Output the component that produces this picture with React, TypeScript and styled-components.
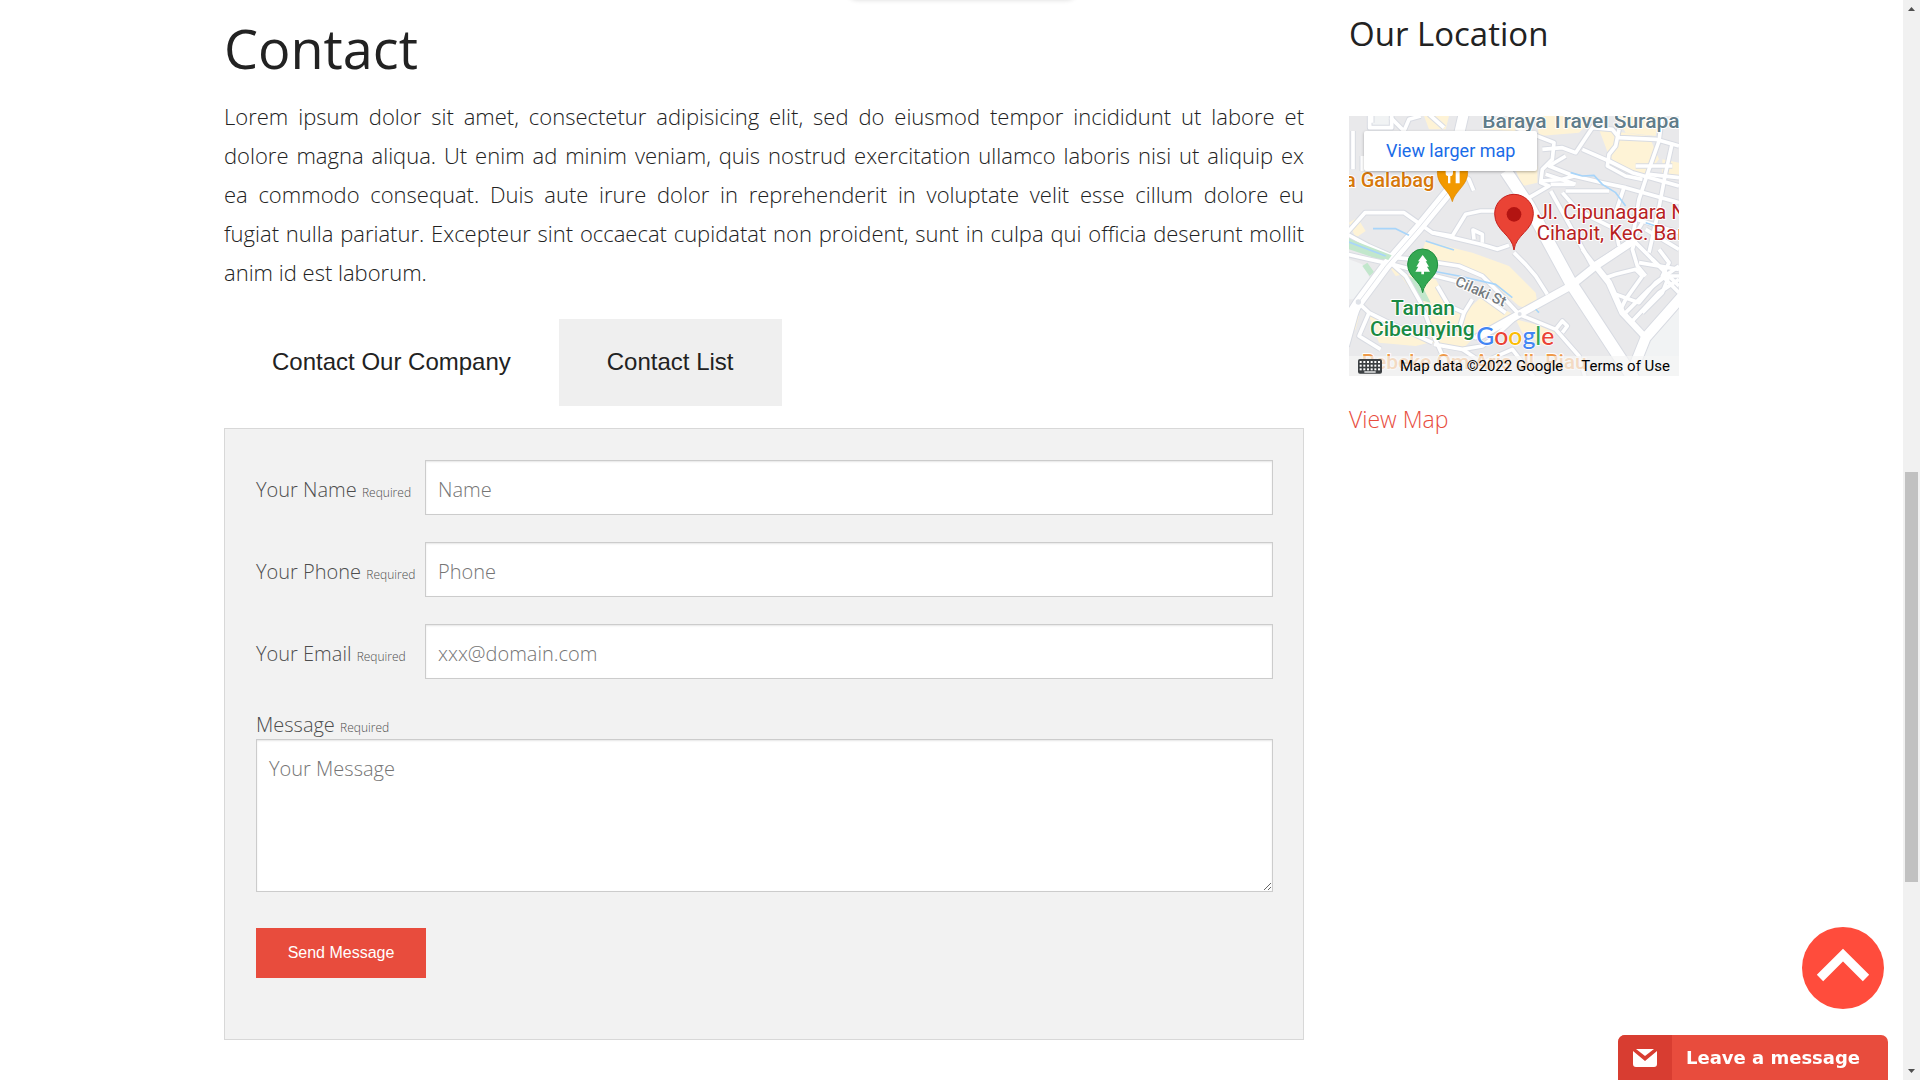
import React from "react";
import styled, { createGlobalStyle } from "styled-components";

const sans = '"Open Sans", "Noto Sans", sans-serif';
const arial = '"Liberation Sans", Arial, sans-serif';
const roboto = 'Roboto, "Liberation Sans", sans-serif';
const red = "#e84c3d";

const GlobalStyle = createGlobalStyle`
  *, *::before, *::after { box-sizing: border-box; }
  body {
    margin: 0;
    background: #fff;
    color: #222;
    font-family: ${sans};
    font-weight: 300;
  }
`;

const Viewport = styled.div`
  display: grid;
  grid-template-columns: minmax(0, 1fr) 17px;
  height: 100vh;
  overflow: hidden;
`;

const Page = styled.div`
  overflow: hidden;
`;

const Row = styled.main`
  display: grid;
  grid-template-columns: minmax(0, 36fr) minmax(0, 11fr);
  column-gap: 45px;
  align-items: start;
  max-width: 1455px;
  margin: 0 auto;
`;

const Content = styled.section`
  padding-top: 9px;
`;

const Title = styled.h1`
  margin: 0 0 10px;
  font-size: 54px;
  line-height: 78px;
  font-weight: 400;
`;

const Intro = styled.p`
  margin: 0 0 27px;
  font-size: 22px;
  line-height: 39px;
  text-align: justify;
`;

const Tabs = styled.div`
  display: flex;
  margin-bottom: 22px;
`;

const Tab = styled.button<{ $active?: boolean }>`
  height: 87px;
  padding: 0 48px 2px;
  border: 0;
  background: ${(p) => (p.$active ? "#fff" : "#efefef")};
  color: #222;
  font: 400 24px ${arial};
  cursor: pointer;
`;

const Form = styled.form`
  padding: 31px 30px 61px 31px;
  border: 1px solid #d8d8d8;
  background: #f2f2f2;
`;

const Field = styled.div`
  display: grid;
  grid-template-columns: 169px minmax(0, 1fr);
  align-items: center;
  margin-bottom: 27px;
`;

const Label = styled.label`
  display: block;
  padding-top: 4px;
  color: #4d4d4d;
  font-size: 20px;
  line-height: 29px;
  white-space: nowrap;
`;

const Required = styled.small`
  font-size: 12px;
  line-height: 1;
`;

const controlStyle = `
  display: block;
  width: 100%;
  margin: 0;
  border: 1px solid #ccc;
  border-radius: 0;
  background: #fff;
  box-shadow: inset 0 1px 2px rgba(0, 0, 0, 0.1);
  color: #4d4d4d;
  font: 300 20px ${sans};
  outline: none;
  &::placeholder { color: #757575; opacity: 1; }
`;

const Input = styled.input`
  ${controlStyle}
  height: 55px;
  padding: 3px 12px 0;
`;

const Textarea = styled.textarea`
  ${controlStyle}
  height: 153px;
  padding: 15px 12px;
  resize: both;
`;

const Submit = styled.button`
  display: block;
  min-width: 170px;
  height: 50px;
  margin-top: 36px;
  padding: 0 30px;
  border: 0;
  background: ${red};
  color: #fff;
  font: 400 16px ${arial};
  cursor: pointer;
`;

const Sidebar = styled.aside`
  padding-top: 11px;
`;

const SideTitle = styled.h2`
  margin: 0 0 59px;
  font-size: 33px;
  line-height: 46px;
  font-weight: 400;
`;

const MapFrame = styled.div`
  position: relative;
  height: 260px;
  margin-bottom: 24px;
  overflow: hidden;
  background: #e9e9eb;
  font-family: ${roboto};
  font-weight: 400;
`;

const MapDrawing = styled.svg`
  display: block;
  width: 100%;
  height: 100%;
`;

const LargerMap = styled.a`
  position: absolute;
  top: 15px;
  left: 15px;
  padding: 0 22px;
  border-radius: 2px;
  background: #fff;
  box-shadow: 0 1px 3px rgba(0, 0, 0, 0.3);
  color: #1a6be8;
  font-size: 18px;
  line-height: 40px;
  text-decoration: none;
`;

const MapFooter = styled.div`
  position: absolute;
  right: 0;
  bottom: 0;
  left: 0;
  display: flex;
  justify-content: space-between;
  align-items: center;
  height: 20px;
  padding: 0 9px;
  background: rgba(245, 245, 245, 0.7);
  color: #000;
  font-size: 15px;
  a { color: inherit; text-decoration: none; }
`;

const ViewMap = styled.a`
  color: ${red};
  font-size: 23px;
  line-height: 38px;
  text-decoration: none;
`;

const TopHint = styled.div`
  position: fixed;
  top: -20px;
  left: 847px;
  width: 230px;
  height: 20px;
  border-radius: 12px;
  box-shadow: 0 0 5px rgba(0, 0, 0, 0.15);
`;

const ToTop = styled.button`
  position: fixed;
  right: 36px;
  bottom: 71px;
  width: 82px;
  height: 82px;
  padding: 0;
  border: 0;
  border-radius: 50%;
  background: #ff4c3c;
  cursor: pointer;
  svg { display: block; }
`;

const Chat = styled.button`
  position: fixed;
  right: 32px;
  bottom: 0;
  display: flex;
  width: 270px;
  height: 45px;
  padding: 0;
  border: 0;
  border-radius: 7px 7px 0 0;
  overflow: hidden;
  background: ${red};
  color: #fff;
  font: 700 18px "DejaVu Sans", Verdana, sans-serif;
  cursor: pointer;
`;

const ChatIcon = styled.span`
  display: grid;
  place-items: center;
  width: 54px;
  height: 100%;
  background: #d83d31;
`;

const ChatText = styled.span`
  padding-left: 14px;
  line-height: 45px;
`;

const Scrollbar = styled.div`
  display: flex;
  flex-direction: column;
  background: #f1f1f1;
`;

const Arrow = styled.svg`
  display: block;
  width: 17px;
  height: 17px;
`;

const Gap = styled.div<{ $grow: number }>`
  flex: ${(p) => p.$grow} 1 0;
`;

const Thumb = styled.div`
  flex: 410 1 0;
  margin: 0 2px;
  background: #c1c1c1;
`;

const minorRoads = [
  "M-5 350L48 290H165L250 350L310 360L350 295L395 285H440",
  "M250 350L395 385L445 400L480 388",
  "M375 370L372 342L400 355L400 380",
  "M330 170L360 190L374 224",
  "M62 -5V35H128V-5M68 -5V20",
  "M125 5L165 45L180 10L215 0",
  "M12 45V160M40 165V120",
  "M240 -5L285 35",
  "M-5 355L60 390L140 425L200 430L330 450L400 480L450 530L510 595",
  "M-5 415L60 430L130 445L260 480L340 500L400 540L470 590",
  "M130 445L170 480L215 560L250 650L290 740",
  "M28 560L60 590L110 615L250 680",
  "M60 590L30 660L95 700",
  "M265 510L300 570L345 590L370 550",
  "M345 590L330 640L380 665L510 595",
  "M255 685L340 700L400 690L440 660L510 595",
  "M340 700L400 740L490 700L560 790",
  "M510 595L620 640L690 720L710 790",
  "M620 640L640 615L655 630L640 650",
  "M495 410L530 445L560 480L595 535",
  "M540 245L600 210L575 200L580 160L610 130L615 80L500 35",
  "M580 100L640 95L680 110L730 35L760 -5",
  "M575 195L640 190L675 180L600 150L650 120",
  "M650 225H780M605 205H675M590 175L680 205",
  "M605 225L730 450",
  "M640 230L675 270L720 300L800 340L810 390",
  "M700 400L735 445L790 410L850 370L880 320",
  "M675 180L760 200L830 215L990 260",
  "M825 215L800 290L990 350",
  "M730 35L790 40L810 65L920 70L990 90",
  "M810 40L800 90L780 115L775 150L830 180L880 190",
  "M700 100L780 135L850 170L990 210",
  "M940 -5L930 75L900 160L870 250L850 370",
  "M970 80L950 170L925 300L900 410",
  "M860 150H970M900 175L990 185",
  "M860 370L850 400L865 450L890 480",
  "M850 370L910 430L990 510",
  "M890 340L990 400M870 440L990 460",
  "M770 485L800 475L860 460L880 480L830 550L815 580",
  "M800 535L870 560L920 500L990 450",
  "M830 590L900 520L950 480L990 480",
  "M845 620L930 530L990 490",
  "M910 430L960 480L940 530L880 590",
  "M930 400L960 440L940 480L990 530",
];

const majorRoads = [
  { d: "M-10 620L28 560L110 450L210 335L300 225L315 120L345 -10", w: 30 },
  { d: "M385 665L510 595L665 510L740 450L860 370", w: 22 },
  { d: "M740 450L780 500L820 590L890 665", w: 18 },
  { d: "M840 790L890 665L1000 540", w: 30 },
  { d: "M470 165L540 270L665 500L855 790", w: 36 },
  { d: "M-10 690L15 600L28 560", w: 20 },
];

function LocationMap() {
  return (
    <MapDrawing viewBox="0 0 990 780" preserveAspectRatio="xMidYMid slice" role="img" aria-label="Map">
      <rect width="990" height="780" fill="#e9e9eb" />
      <g fill="#fef3d6">
        <path d="M400 40L480 0H560L500 45ZM0 320L25 305L50 345L20 365ZM225 0H300L290 40H240Z" />
        <path d="M230 375L370 410L480 450L560 530L570 590L510 570L430 500L300 440L210 430Z" />
        <path d="M150 470L260 490L300 560L345 590L400 540L500 600L380 660L340 700L250 680L210 560ZM60 600L110 615L240 680L200 690L90 680Z" />
        <path d="M500 610L560 625L620 650L590 690L520 650Z" />
        <path d="M495 150H565V200L520 210ZM570 60L690 50L740 0H560ZM750 40L900 60L930 130L890 180L830 170L780 120ZM800 0H930L920 60L830 50ZM940 130L990 140V190H940Z" />
        <path d="M120 450L150 445L165 475L140 480ZM0 590L30 600L20 640L0 650Z" />
      </g>
      <g fill="#f1f3f4">
        <path d="M0 430L40 445L70 500L30 550H0ZM60 0H130V40H60ZM900 640L990 560V780H860Z" />
      </g>
      <g fill="#c2e7cc">
        <path d="M0 360L130 415L120 440L0 400ZM40 450L55 440L75 468L62 480ZM180 480L215 500L245 560L205 550Z" />
      </g>
      <g fill="none" stroke="#d8dbe2" strokeLinejoin="round">
        {minorRoads.map((d) => <path key={d} d={d} strokeWidth="17" />)}
        {majorRoads.map((r) => <path key={r.d} d={r.d} strokeWidth={r.w + 6} />)}
      </g>
      <g fill="none" stroke="#fff" strokeLinejoin="round">
        {minorRoads.map((d) => <path key={d} d={d} strokeWidth="11" />)}
        {majorRoads.map((r) => <path key={r.d} d={r.d} strokeWidth={r.w} />)}
      </g>
      <path d="M0 368L128 418L118 432L0 392Z" fill="#c2e7cc" />
      <g fill="none" stroke="#a8d5fa" strokeWidth="5" strokeLinejoin="round">
        <path d="M0 378L110 420M72 338H140L180 358M230 375L315 402M250 465L330 480L440 505L490 545M560 580L570 590" />
        <path d="M665 170L700 180L735 178L760 205L800 230L830 270M890 320L920 330" />
      </g>
      <path d="M28 560L110 450L210 335L300 225" fill="none" stroke="#dfe2e8" strokeWidth="3" />
      <circle cx="28" cy="558" r="8" fill="#dfe2e8" />
      <circle cx="512" cy="594" r="6" fill="#dfe2e8" />

      <g stroke="#fff" strokeWidth="6" strokeLinejoin="round" paintOrder="stroke" fontWeight="500">
        <text x="400" y="36" fontSize="63" fill="#5f7c8a">Baraya Travel Surapati</text>
        <text x="256" y="214" fontSize="60" fill="#d6780c" textAnchor="end">a Galabag</text>
        <text x="563" y="309" fontSize="61" fontWeight="400" fill="#b8221f">Jl. Cipunagara No</text>
        <text x="563" y="372" fontSize="61" fontWeight="400" fill="#b8221f">Cihapit, Kec. Bandung</text>
        <text x="222" y="597" fontSize="63" fill="#1a8a43" textAnchor="middle">Taman</text>
        <text x="220" y="659" fontSize="63" fill="#1a8a43" textAnchor="middle">Cibeunying</text>
        <text x="316" y="507" fontSize="44" fill="#757b80" transform="rotate(24 316 507)">Cilaki St</text>
        <text x="38" y="760" fontSize="63" fill="#ee9a4a">Bebeke Om Aris Jl. Riau</text>
      </g>

      <path d="M310 257C303 225 265 208 265 170A45 45 0 0 1 356 170C356 208 318 225 310 257Z" fill="#f29900" stroke="#d98300" strokeWidth="2" />
      <path d="M290 150V172Q290 180 297 180V202H304V180Q312 180 312 170V150ZM320 202V165Q322 155 332 155V202Z" fill="#fff" />
      <path d="M495 402C490 355 437 345 437 293A58 58 0 0 1 553 293C553 345 500 355 495 402Z" fill="#ea4335" stroke="#c5221f" strokeWidth="3" />
      <circle cx="495" cy="295" r="22" fill="#b31412" />
      <path d="M221 530C215 492 176 485 176 444A45 45 0 0 1 266 444C266 485 227 492 221 530Z" fill="#34a853" stroke="#1e8e3e" strokeWidth="3" />
      <path d="M221 417L235 436H230L240 452H234L243 467H225V475H217V467H199L208 452H202L212 436H207Z" fill="#fff" />

      <text x="382" y="688" fontSize="74" fontFamily="Lato, sans-serif" fontWeight="500" stroke="#fff" strokeWidth="4" paintOrder="stroke">
        <tspan fill="#4285f4">G</tspan><tspan fill="#ea4335">o</tspan><tspan fill="#fbbc04">o</tspan><tspan fill="#4285f4">g</tspan><tspan fill="#34a853">l</tspan><tspan fill="#ea4335">e</tspan>
      </text>
    </MapDrawing>
  );
}

function KeyboardIcon() {
  return (
    <svg width="24" height="16" viewBox="0 0 72 48" aria-hidden="true">
      <rect y="3" width="72" height="44" rx="6" fill="#3c4043" />
      <g fill="#fff">
        {[9, 20, 31].map((y) =>
          [5, 16, 27, 38, 49, 60].map((x) => <rect key={`${x}-${y}`} x={x} y={y} width="6" height="6" />)
        )}
        <rect x="19" y="40" width="34" height="4" />
      </g>
    </svg>
  );
}

const fields = [
  { id: "name", label: "Your Name", placeholder: "Name", type: "text" },
  { id: "phone", label: "Your Phone", placeholder: "Phone", type: "tel" },
  { id: "email", label: "Your Email", placeholder: "xxx@domain.com", type: "email" },
];

export default function App() {
  return (
    <>
      <GlobalStyle />
      <Viewport>
        <Page>
          <Row>
            <Content>
              <Title>Contact</Title>
              <Intro>
                Lorem ipsum dolor sit amet, consectetur adipisicing elit, sed do eiusmod tempor
                incididunt ut labore et dolore magna aliqua. Ut enim ad minim veniam, quis nostrud
                exercitation ullamco laboris nisi ut aliquip ex ea&nbsp;commodo consequat. Duis aute
                irure dolor in reprehenderit in voluptate velit esse cillum dolore eu
                fugiat&nbsp;nulla pariatur. Excepteur sint occaecat cupidatat non proident, sunt in
                culpa qui officia deserunt mollit anim&nbsp;id est laborum.
              </Intro>
              <Tabs>
                <Tab type="button" $active>Contact Our Company</Tab>
                <Tab type="button">Contact List</Tab>
              </Tabs>
              <Form onSubmit={(e) => e.preventDefault()}>
                {fields.map((f) => (
                  <Field key={f.id}>
                    <Label htmlFor={f.id}>
                      {f.label} <Required>Required</Required>
                    </Label>
                    <Input id={f.id} type={f.type} placeholder={f.placeholder} />
                  </Field>
                ))}
                <Label htmlFor="message">
                  Message <Required>Required</Required>
                </Label>
                <Textarea id="message" placeholder="Your Message" />
                <Submit type="submit">Send Message</Submit>
              </Form>
            </Content>
            <Sidebar>
              <SideTitle>Our Location</SideTitle>
              <MapFrame>
                <LocationMap />
                <LargerMap href="#map">View larger map</LargerMap>
                <MapFooter>
                  <KeyboardIcon />
                  <span>Map data ©2022 Google</span>
                  <a href="#terms">Terms of Use</a>
                </MapFooter>
              </MapFrame>
              <ViewMap href="#map">View Map</ViewMap>
            </Sidebar>
          </Row>
        </Page>
        <Scrollbar aria-hidden="true">
          <Arrow viewBox="0 0 17 17"><path d="M5 11L8.500 7L12 11Z" fill="#505050" /></Arrow>
          <Gap $grow={455} />
          <Thumb />
          <Gap $grow={181} />
          <Arrow viewBox="0 0 17 17"><path d="M5 6L8.500 10L12 6Z" fill="#505050" /></Arrow>
        </Scrollbar>
      </Viewport>
      <TopHint />
      <ToTop type="button" aria-label="Back to top">
        <svg width="82" height="82" viewBox="0 0 82 82">
          <path d="M18 51L41 28L64 51" fill="none" stroke="#fff" strokeWidth="9" />
        </svg>
      </ToTop>
      <Chat type="button">
        <ChatIcon>
          <svg width="24" height="18" viewBox="0 0 24 18">
            <path d="M3 0H21L12 7Z" fill="#fff" />
            <path d="M0 2L12 12L24 2V15A3 3 0 0 1 21 18H3A3 3 0 0 1 0 15Z" fill="#fff" />
          </svg>
        </ChatIcon>
        <ChatText>Leave a message</ChatText>
      </Chat>
    </>
  );
}
